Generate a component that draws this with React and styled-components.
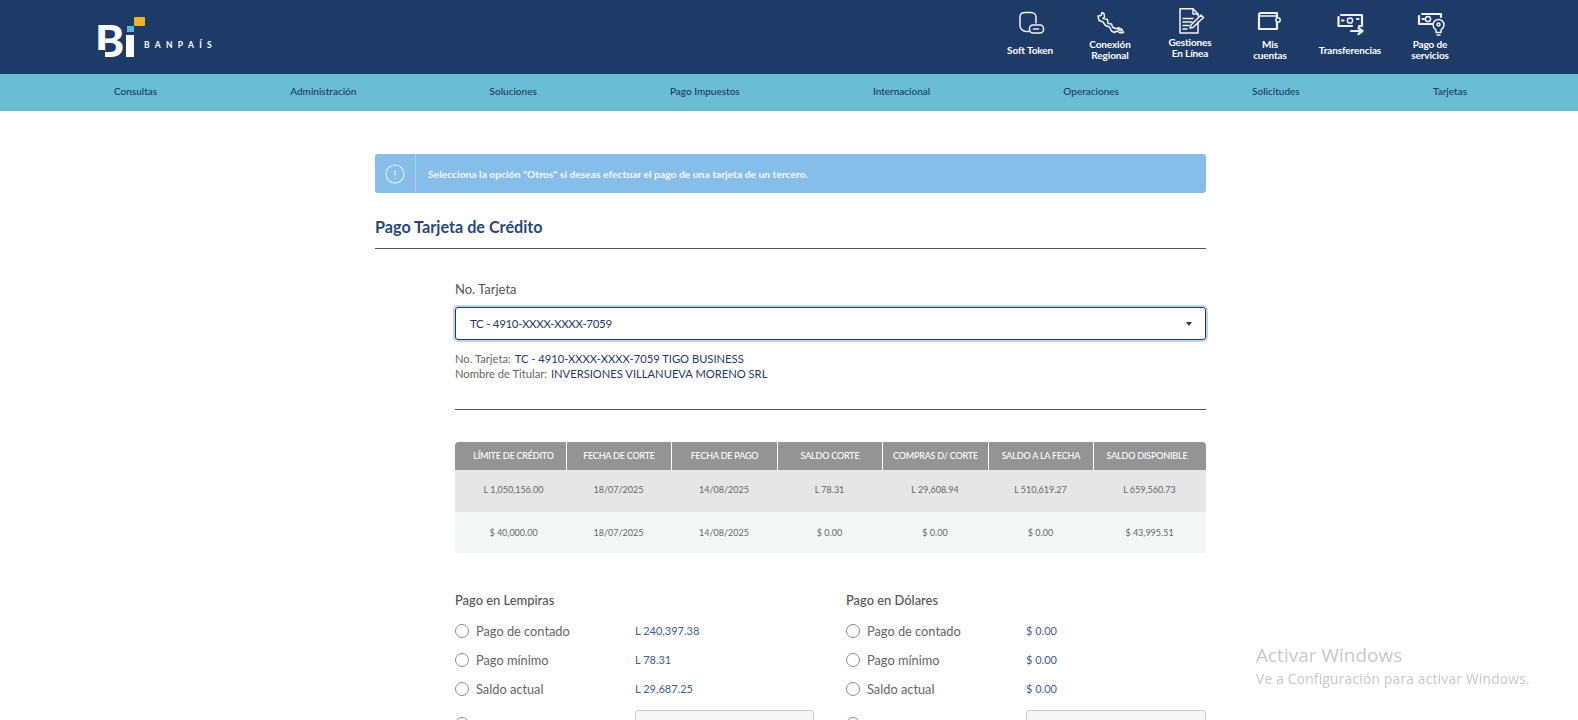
import styled, { createGlobalStyle } from 'styled-components'

const GlobalStyle = createGlobalStyle`
    html, body {
        margin: 0;
        height: 720px;
        overflow: hidden;
        background: #fff;
        font-family: Lato, "Liberation Sans", sans-serif;
    }
`

const navy = '#1e3a66'

const Header = styled.header`
    height: 74px;
    background: ${navy};
    display: flex;
    justify-content: space-between;
    padding: 0 108px 0 95px;
`

const Logo = styled.div`
    display: flex;
    align-items: flex-start;
    padding-top: 13px;
`

const LogoMark = styled.svg`
    width: 51px;
    height: 56px;
    display: block;
`

const LogoMarkLetter = styled.text`
    font-family: Lato, sans-serif;
    font-weight: 900;
    font-size: 44px;
    fill: #fff;
`

const LogoName = styled.span`
    margin: 27px 0 0 -2px;
    font-size: 8.5px;
    line-height: 10px;
    font-weight: 700;
    letter-spacing: 5.3px;
    color: #fff;
`

const Shortcuts = styled.nav`
    display: flex;
`

const Shortcut = styled.a`
    width: 80px;
    display: flex;
    flex-direction: column;
    align-items: center;
    color: #fff;
`

const ShortcutIcon = styled.svg`
    width: 32px;
    height: 30px;
    margin-top: 8px;
    fill: none;
    stroke: #eef2f7;
    stroke-width: 1.5;
    stroke-linejoin: round;
    stroke-linecap: round;
`

const ThickLine = styled.path`
    stroke-width: 2.2;
`

const ShortcutLabel = styled.span`
    height: 24px;
    margin-top: ${p => (p.$raised ? '-2px' : '0')};
    display: flex;
    align-items: center;
    text-align: center;
    font-size: 10px;
    line-height: 11px;
    font-weight: 700;
    letter-spacing: -0.12px;
`

const Nav = styled.nav`
    height: 37px;
    box-sizing: border-box;
    background: #69bed4;
    display: flex;
    align-items: center;
    justify-content: space-between;
    padding: 0 111px 3px 114px;
    font-size: 10px;
    font-weight: 500;
    color: #17395f;
`

const Main = styled.main`
    width: 831px;
    margin-left: 375px;
    padding-top: 43px;
`

const Alert = styled.div`
    height: 39px;
    display: flex;
    align-items: center;
    background: #87bde9;
    border-radius: 3px;
    color: #f4f9fd;
    font-size: 10.3px;
    font-weight: 700;
`

const AlertIcon = styled.div`
    width: 40px;
    height: 100%;
    display: flex;
    align-items: center;
    justify-content: center;
    border-right: 1px solid #a9d0ef;
    margin-right: 12px;
    svg {
        width: 20px;
        height: 20px;
    }
`

const Title = styled.h1`
    margin: 0;
    height: 56px;
    display: flex;
    align-items: center;
    border-bottom: 1px solid #555;
    font-size: 16.2px;
    font-weight: 700;
    color: #28487a;
    padding-top: 11px;
    box-sizing: border-box;
`

const Content = styled.section`
    margin-left: 80px;
`

const FieldLabel = styled.label`
    display: block;
    margin-top: 31px;
    font-size: 13px;
    line-height: 18px;
    color: #555;
`

const Select = styled.div`
    height: 33px;
    margin-top: 9px;
    box-sizing: border-box;
    display: flex;
    align-items: center;
    justify-content: space-between;
    padding: 0 13px 0 14px;
    border: 1px solid ${navy};
    border-radius: 3px;
    box-shadow: 0 0 0 2px #bcd6ee;
    font-size: 11.5px;
    letter-spacing: -0.3px;
    color: ${navy};
`

const Caret = styled.span`
    width: 0;
    height: 0;
    border-left: 3px solid transparent;
    border-right: 3px solid transparent;
    border-top: 4px solid ${navy};
`

const Details = styled.div`
    margin-top: 11px;
    padding-bottom: 28px;
    border-bottom: 1px solid #555;
    font-size: 11.2px;
    line-height: 15px;
    color: #666;
    span {
        color: ${navy};
        margin-left: 1px;
    }
`

const Table = styled.div`
    margin-top: 32px;
    font-size: 9px;
    color: #666;
`

const TableRow = styled.div`
    display: grid;
    grid-template-columns: 111px 105px 106px 105px 106px 105px 113px;
    box-sizing: border-box;
    text-align: center;
    align-items: center;
    height: ${p => p.$height}px;
    padding-bottom: ${p => p.$lift || 0}px;
    background: ${p => p.$bg};
`

const Cell = styled.div`
    &:first-child {
        padding-left: 6px;
    }
`

const HeadRow = styled(TableRow)`
    border-radius: 4px 4px 0 0;
    align-items: stretch;
    color: #fff;
    font-weight: 500;
    letter-spacing: -0.2px;
`

const HeadCell = styled.div`
    display: flex;
    align-items: center;
    justify-content: center;
    padding-bottom: 2px;
    & + & {
        border-left: 1px solid #fff;
    }
    &:first-child {
        padding-left: 6px;
    }
    &:last-child {
        padding-right: 6px;
    }
`

const Payments = styled.div`
    display: grid;
    grid-template-columns: 359px 360px;
    column-gap: 32px;
    margin-top: 38px;
`

const PaymentTitle = styled.h2`
    margin: 0 0 7px;
    font-size: 12.9px;
    line-height: 18px;
    font-weight: 500;
    color: #555;
`

const PaymentRow = styled.div`
    display: grid;
    grid-template-columns: 180px 1fr;
    align-items: center;
    height: 29px;
`

const RadioLabel = styled.label`
    display: flex;
    align-items: center;
    gap: 7px;
    font-size: 12.8px;
    color: #666;
`

const Radio = styled.span`
    width: 14px;
    height: 14px;
    border: 1px solid #8c8c8c;
    border-radius: 50%;
    box-sizing: border-box;
    flex: none;
`

const Amount = styled.span`
    font-size: 11px;
    color: #3d5f92;
`

const OtherRow = styled(PaymentRow)`
    margin-top: 7px;
    height: 34px;
    align-items: start;
    ${RadioLabel} {
        padding-top: 7px;
    }
`

const OtherInput = styled.div`
    height: 34px;
    box-sizing: border-box;
    background: #f7f7f7;
    border: 1px solid #ccc;
    border-radius: 3px;
`

const Watermark = styled.div`
    position: fixed;
    left: 1256px;
    top: 646px;
    color: #c8c8c8;
    font-family: "Open Sans", sans-serif;
    line-height: 1;
`

const WatermarkTitle = styled.div`
    font-size: 19px;
    margin-bottom: 7px;
`

const WatermarkText = styled.div`
    font-size: 13.8px;
    letter-spacing: 0.2px;
`

const shortcuts = [
    {
        label: <>Soft Token</>,
        icon: (
            <>
                <path d="M15 23.5H12.5C8.5 23.5 6 20.5 6 17.5V9C6 6 8 4.5 11 4.5H17C20 4.5 22 6.5 22 9V15" />
                <rect x="15.5" y="17" width="14" height="8" rx="3.5" />
                <path d="M19.5 21h5" strokeDasharray="1 1.2" />
            </>
        ),
    },
    {
        label: <>Conexión<br />Regional</>,
        icon: (
            <>
                <path d="M4 8L7 7.5L8 4.5L10 5.5L10.5 9L9 10.5L13.5 11.5L14 15.5L17.5 16L18.5 19L21 20.5L25 20L28 21.5L29.5 24.5L26 25L23 23L20.5 24.5L17.5 23L15.5 19L11.5 17.5L9 14L5 12.5Z" />
                <path d="M24 21.5l3 1.5" />
            </>
        ),
    },
    {
        label: <>Gestiones<br />En Línea</>,
        raised: true,
        icon: (
            <>
                <path d="M24 14V25H6V0.8H19L24 6V8" />
                <path d="M19 0.8V6H24" />
                <path d="M9 10.5H19M9 14H18M9 17.5H15M9 21H13" />
                <path d="M16 20L17 17L27 7L29.5 9.5L19 19.5Z" />
            </>
        ),
    },
    {
        label: <>Mis<br />cuentas</>,
        icon: (
            <>
                <ThickLine d="M23 14.5V21H5V7C5 5.5 6 5 7 5H23V9" />
                <path d="M5 8H23" />
                <circle cx="24" cy="12" r="2.2" />
            </>
        ),
    },
    {
        label: <>Transferencias</>,
        icon: (
            <>
                <ThickLine d="M7 7H28V18H25M4.5 9V18H18" />
                <circle cx="16" cy="12.5" r="2.6" />
                <ThickLine d="M8 12.5h1.5M23 11h1.5" />
                <ThickLine d="M17 23H28M24.5 20L28.5 23L24.5 26" />
            </>
        ),
    },
    {
        label: <>Pago de<br />servicios</>,
        icon: (
            <>
                <ThickLine d="M18 16H5V8M8 6H27V9" />
                <circle cx="14" cy="11" r="2.6" />
                <ThickLine d="M8.5 11h1.5" />
                <path d="M22 22C20 20.5 19 19 19 17A5.5 5.5 0 0 1 30 17C30 19 29 20.5 27 22V24.5H22Z" />
                <path d="M23 27H26" />
                <circle cx="24.5" cy="16.5" r="1.5" />
            </>
        ),
    },
]

const navItems = ['Consultas', 'Administración', 'Soluciones', 'Pago Impuestos', 'Internacional', 'Operaciones', 'Solicitudes', 'Tarjetas']

const heads = ['LÍMITE DE CRÉDITO', 'FECHA DE CORTE', 'FECHA DE PAGO', 'SALDO CORTE', 'COMPRAS D/ CORTE', 'SALDO A LA FECHA', 'SALDO DISPONIBLE']

const rows = [
    { bg: '#e6e6e6', height: 42, lift: 3, cells: ['L 1,050,156.00', '18/07/2025', '14/08/2025', 'L 78.31', 'L 29,608.94', 'L 510,619.27', 'L 659,560.73'] },
    { bg: '#f5f6f6', height: 41, lift: 0, cells: ['$ 40,000.00', '18/07/2025', '14/08/2025', '$ 0.00', '$ 0.00', '$ 0.00', '$ 43,995.51'] },
]

const payments = [
    { title: 'Pago en Lempiras', amounts: ['L 240,397.38', 'L 78.31', 'L 29,687.25'] },
    { title: 'Pago en Dólares', amounts: ['$ 0.00', '$ 0.00', '$ 0.00'] },
]

const options = ['Pago de contado', 'Pago mínimo', 'Saldo actual']

const App = () => {
    return (
        <>
            <GlobalStyle />
            <Header>
                <Logo>
                    <LogoMark viewBox="0 -2 51 56">
                        <LogoMarkLetter x="0" y="42">B</LogoMarkLetter>
                        <rect x="3" y="35" width="7" height="7" fill={navy} />
                        <rect x="31" y="20" width="8" height="22" fill="#fff" />
                        <rect x="32" y="11" width="7" height="6" fill="#5bb8d4" />
                        <rect x="39" y="2" width="11" height="9" rx="1" fill="#f0b429" />
                    </LogoMark>
                    <LogoName>BANPAÍS</LogoName>
                </Logo>
                <Shortcuts>
                    {shortcuts.map((s, i) => (
                        <Shortcut key={i}>
                            <ShortcutIcon viewBox="0 0 32 30">{s.icon}</ShortcutIcon>
                            <ShortcutLabel $raised={s.raised}><span>{s.label}</span></ShortcutLabel>
                        </Shortcut>
                    ))}
                </Shortcuts>
            </Header>
            <Nav>
                {navItems.map(item => <span key={item}>{item}</span>)}
            </Nav>
            <Main>
                <Alert>
                    <AlertIcon>
                        <svg viewBox="0 0 20 20" fill="none" stroke="#e4f0fa" strokeWidth="1.1">
                            <circle cx="10" cy="10" r="9" />
                            <path d="M10 6v5.5M10 13.5v1" />
                        </svg>
                    </AlertIcon>
                    Selecciona la opción "Otros" si deseas efectuar el pago de una tarjeta de un tercero.
                </Alert>
                <Title>Pago Tarjeta de Crédito</Title>
                <Content>
                    <FieldLabel>No. Tarjeta</FieldLabel>
                    <Select>
                        TC - 4910-XXXX-XXXX-7059
                        <Caret />
                    </Select>
                    <Details>
                        No. Tarjeta: <span>TC - 4910-XXXX-XXXX-7059 TIGO BUSINESS</span>
                        <br />
                        Nombre de Titular: <span>INVERSIONES VILLANUEVA MORENO SRL</span>
                    </Details>
                    <Table>
                        <HeadRow $height={28} $bg="#949494">
                            {heads.map(h => <HeadCell key={h}>{h}</HeadCell>)}
                        </HeadRow>
                        {rows.map((r, i) => (
                            <TableRow key={i} $height={r.height} $lift={r.lift} $bg={r.bg}>
                                {r.cells.map((c, j) => <Cell key={j}>{c}</Cell>)}
                            </TableRow>
                        ))}
                    </Table>
                    <Payments>
                        {payments.map(p => (
                            <div key={p.title}>
                                <PaymentTitle>{p.title}</PaymentTitle>
                                {options.map((o, i) => (
                                    <PaymentRow key={o}>
                                        <RadioLabel><Radio />{o}</RadioLabel>
                                        <Amount>{p.amounts[i]}</Amount>
                                    </PaymentRow>
                                ))}
                                <OtherRow>
                                    <RadioLabel><Radio /></RadioLabel>
                                    <OtherInput />
                                </OtherRow>
                            </div>
                        ))}
                    </Payments>
                </Content>
            </Main>
            <Watermark>
                <WatermarkTitle>Activar Windows</WatermarkTitle>
                <WatermarkText>Ve a Configuración para activar Windows.</WatermarkText>
            </Watermark>
        </>
    )
}

export default App
